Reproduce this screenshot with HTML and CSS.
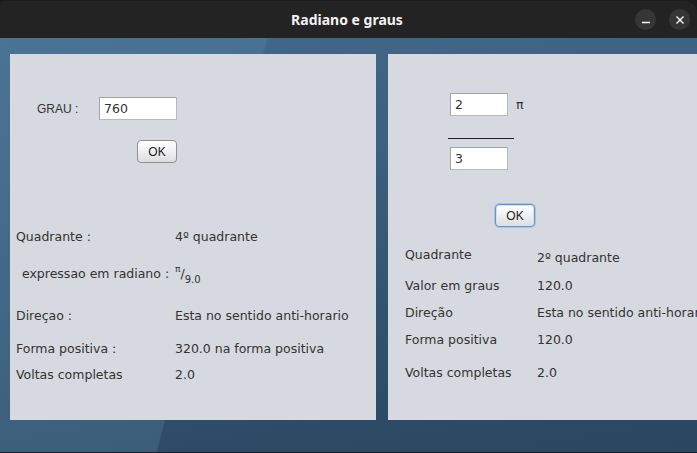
FILE: index.html
```html
<!DOCTYPE html>
<html lang="pt">
<head>
<meta charset="utf-8">
<title>Radiano e graus</title>
<link rel="stylesheet" href="styles.css">
</head>
<body>
<div class="window">
  <header class="titlebar">
    <div class="title">Radiano e graus</div>
    <div class="controls">
      <span class="ctl"><svg width="10" height="10" viewBox="0 0 10 10"><path d="M1 7.5h8" stroke="#fff" stroke-width="1.5"/></svg></span>
      <span class="ctl"><svg width="10" height="10" viewBox="0 0 10 10"><path d="M1.5 1.5l7 7M8.5 1.5l-7 7" stroke="#fff" stroke-width="1.4"/></svg></span>
    </div>
  </header>
  <main class="desk">
    <section class="panel panel-left">
      <div class="grau-row">
        <span class="lbl">GRAU :</span>
        <div class="field field-wide">760</div>
      </div>
      <button class="btn btn-left">OK</button>
      <div class="rows rows-left">
        <div class="row"><span class="k">Quadrante :</span><span class="v">4º quadrante</span></div>
        <div class="row gap-17"><span class="k indent">expressao em radiano :</span><span class="v frac"><sup>π</sup>/<sub>9.0</sub></span></div>
        <div class="row gap-22"><span class="k">Direçao :</span><span class="v">Esta no sentido anti-horario</span></div>
        <div class="row gap-13"><span class="k">Forma positiva :</span><span class="v">320.0 na forma positiva</span></div>
        <div class="row gap-6"><span class="k">Voltas completas</span><span class="v">2.0</span></div>
      </div>
    </section>
    <section class="panel panel-right">
      <div class="num-row">
        <div class="field">2</div>
        <span class="pi">π</span>
      </div>
      <div class="bar"></div>
      <div class="field den">3</div>
      <button class="btn btn-focus">OK</button>
      <div class="rows rows-right">
        <div class="row"><span class="k">Quadrante</span><span class="v drop">2º quadrante</span></div>
        <div class="row gap-8"><span class="k">Valor em graus</span><span class="v">120.0</span></div>
        <div class="row gap-7"><span class="k">Direção</span><span class="v">Esta no sentido anti-horario</span></div>
        <div class="row gap-7"><span class="k">Forma positiva</span><span class="v">120.0</span></div>
        <div class="row gap-13"><span class="k">Voltas completas</span><span class="v">2.0</span></div>
      </div>
    </section>
  </main>
</div>
</body>
</html>
```
FILE: styles.css
```css
* { box-sizing: border-box; }
html, body {
  margin: 0;
  padding: 0;
  width: 697px;
  height: 453px;
  overflow: hidden;
  background: #1c1c1c;
}
.window {
  display: flex;
  flex-direction: column;
  width: 697px;
  height: 452px;
  padding-top: 1px;
}
.titlebar {
  height: 37px;
  flex: none;
  background: #232323;
  border-top-right-radius: 12px;
  border-top-left-radius: 4px;
  display: flex;
  align-items: center;
  justify-content: center;
  position: relative;
}
.title {
  font-family: "Noto Sans", "DejaVu Sans", sans-serif;
  font-weight: 700;
  font-size: 14px;
  color: #f2f2f2;
  margin-left: -3px;
  margin-top: -1px;
}
.controls {
  position: absolute;
  right: 7px;
  top: 8px;
  display: flex;
  gap: 13px;
}
.ctl {
  width: 21px;
  height: 21px;
  border-radius: 50%;
  background: #363636;
  display: flex;
  align-items: center;
  justify-content: center;
}
.desk {
  flex: 1;
  display: flex;
  gap: 12px;
  padding: 16px 0 0 10px;
  overflow: hidden;
  background:
    linear-gradient(105deg, rgba(95,140,175,0.28) 0%, rgba(95,140,175,0.28) 33%, rgba(0,0,0,0) 33.2%),
    linear-gradient(170deg, #43698a 0%, #3b5f7f 35%, #2f4e69 75%, #2a4660 100%);
}
.panel {
  height: 366px;
  flex: none;
  background: #d6d9df;
  font-family: "DejaVu Sans", sans-serif;
  font-size: 12.5px;
  color: #333;
  display: flex;
  flex-direction: column;
  align-items: flex-start;
}
.panel-left {
  width: 366px;
  padding: 43px 0 0 0;
}
.panel-right {
  width: 320px;
  padding: 39px 0 0 0;
}
.grau-row {
  display: flex;
  align-items: center;
  padding-left: 27px;
}
.lbl {
  font-family: "Liberation Sans", Arial, sans-serif;
  font-size: 12px;
  color: #333;
  width: 62px;
}
.field {
  width: 58px;
  height: 23px;
  background: #fff;
  border: 1px solid #b8b9bb;
  border-top-color: #a3a4a6;
  border-left-color: #a3a4a6;
  font-family: "DejaVu Sans", sans-serif;
  font-size: 12.5px;
  line-height: 21px;
  color: #333;
  padding-left: 4px;
}
.field-wide { width: 78px; }
.btn {
  width: 40px;
  height: 23px;
  padding: 0;
  border: 1px solid #8e9093;
  border-radius: 4px;
  background: linear-gradient(#ffffff, #f4f4f5 40%, #dcdddf);
  font-family: "Liberation Sans", Arial, sans-serif;
  font-size: 12px;
  color: #222;
}
.btn-left {
  margin: 20px 0 0 127px;
}
.btn-focus {
  margin: 34px 0 0 107px;
  border-color: #6d93c2;
  box-shadow: 0 0 0 1px #a9c3e3, inset 0 0 0 1px #d2e0f0;
}
.rows {
  display: flex;
  flex-direction: column;
}
.rows-left { margin-top: 64px; padding-left: 6px; }
.rows-right { margin-top: 18px; padding-left: 17px; }
.row {
  display: grid;
  align-items: start;
  line-height: 20px;
  white-space: nowrap;
}
.rows-left .row { grid-template-columns: 159px auto; }
.rows-right .row { grid-template-columns: 132px auto; }
.indent { padding-left: 6px; }
.gap-6 { margin-top: 6px; }
.gap-7 { margin-top: 7px; }
.gap-8 { margin-top: 8px; }
.gap-13 { margin-top: 13px; }
.gap-17 { margin-top: 17px; }
.gap-22 { margin-top: 22px; }
.drop { margin-top: 3px; }
.frac sup {
  font-size: 9px;
  vertical-align: 6px;
  line-height: 0;
}
.frac sub {
  font-size: 10px;
  vertical-align: -5px;
  line-height: 0;
}
.num-row {
  display: flex;
  align-items: center;
  padding-left: 62px;
  gap: 8px;
}
.pi { line-height: 20px; }
.bar {
  width: 66px;
  height: 1px;
  background: #1e1e1e;
  margin: 22px 0 0 60px;
}
.den { margin: 8px 0 0 62px; }
```
